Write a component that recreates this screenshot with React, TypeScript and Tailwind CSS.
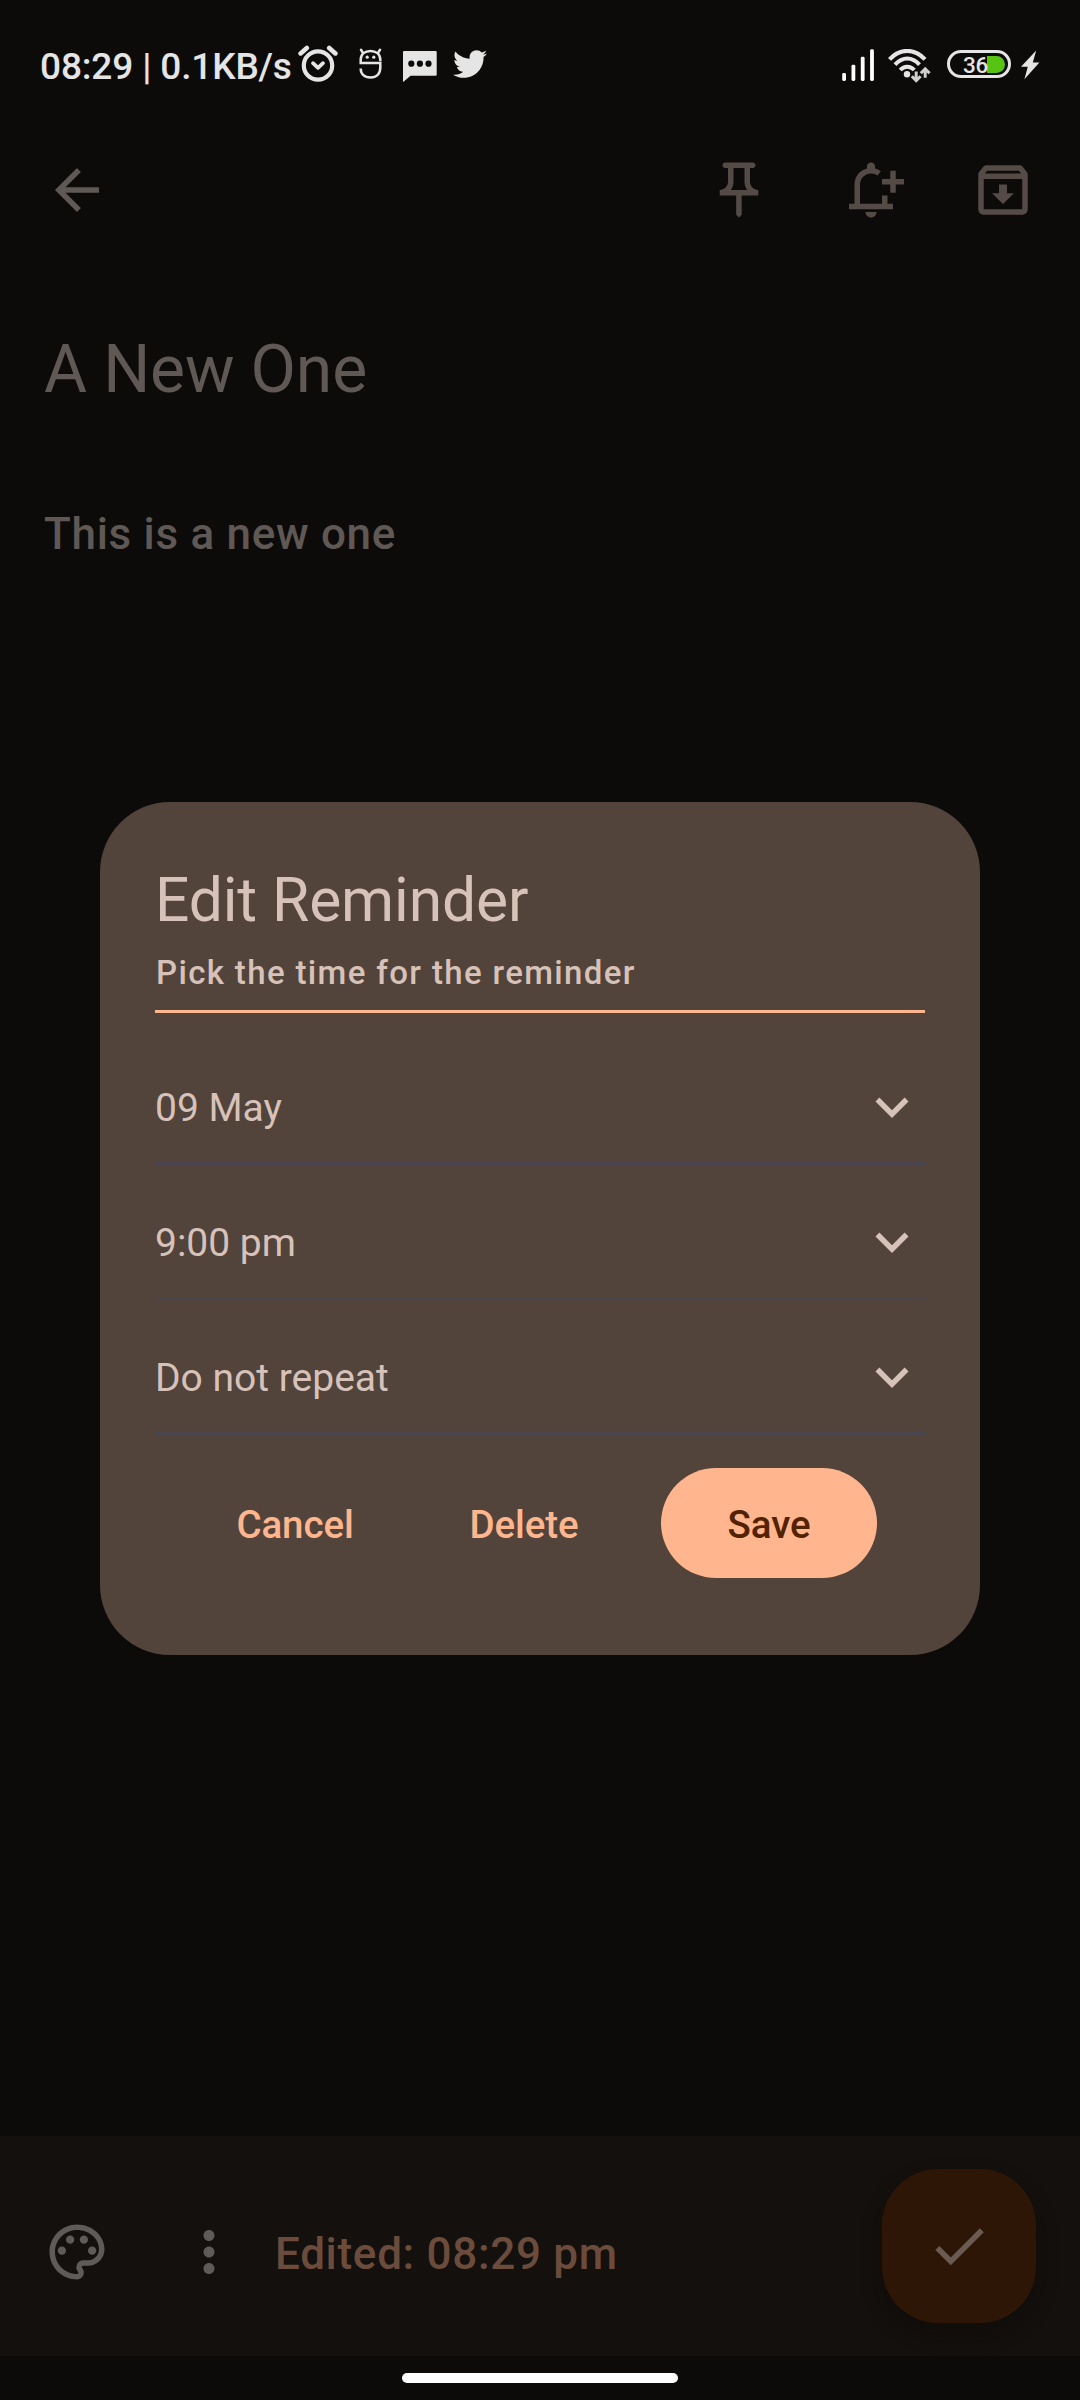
import React from "react";
import { FaTwitter } from "react-icons/fa";
import { MdArrowBack, MdCheck, MdKeyboardArrowDown, MdMoreVert, MdOutlinePalette, MdOutlinePushPin } from "react-icons/md";

function AlarmIcon() {
  return (
    <svg className="h-[37px] w-[40px]" viewBox="0 0 40 37" fill="none" stroke="#e5e5e5">
      <circle cx="20" cy="20.5" r="14.2" strokeWidth="4.2" />
      <path d="M2.6 8.4 8.8 3M37.4 8.4 31.2 3" strokeWidth="4.6" strokeLinecap="round" />
      <path d="M15 18.2 20 22.8 25 18.2" strokeWidth="3.8" strokeLinecap="round" strokeLinejoin="round" />
    </svg>
  );
}

function RobotIcon() {
  return (
    <svg className="h-[31px] w-[23px]" viewBox="0 0 23 31" fill="none" stroke="#e5e5e5" strokeWidth="2.5">
      <path d="M21.3 13.2V11.5C21.3 6 17 2.9 11.5 2.9S1.7 6 1.7 11.500V15H21.300V19.500C21.300 26 17.500 29.500 11.500 29.500S1.700 26 1.700 20.500" />
      <path d="M3.8 4.6 2 1.8M19.2 4.6 21 1.8" strokeLinecap="round" />
      <g fill="#e5e5e5" stroke="none">
        <circle cx="8.2" cy="9.2" r="1.6" />
        <circle cx="14.8" cy="9.2" r="1.6" />
      </g>
    </svg>
  );
}

function ChatIcon() {
  return (
    <svg className="h-[31px] w-[34px]" viewBox="0 0 34 31">
      <path d="M1.5 0h31c.8 0 1.2.5 1.2 1.2v22.3c0 .8-.4 1.2-1.2 1.2H7.5L.8 30.6c-.5.4-.8.1-.8-.4V1.2C0 .5.6 0 1.5 0z" fill="#e5e5e5" />
      <g fill="#0c0b09">
        <circle cx="8.3" cy="12.7" r="3.1" />
        <circle cx="16.9" cy="12.7" r="3.1" />
        <circle cx="25.5" cy="12.7" r="3.1" />
      </g>
    </svg>
  );
}

function SignalIcon() {
  return (
    <svg className="h-[32px] w-[33px]" viewBox="0 0 33 32" fill="#ffffff">
      <rect x="0.2" y="24" width="3.8" height="8" rx="1.4" />
      <rect x="9.5" y="15.8" width="3.8" height="16.2" rx="1.4" />
      <rect x="18.8" y="7.8" width="3.8" height="24.2" rx="1.4" />
      <rect x="28.1" y="0.3" width="3.8" height="31.7" rx="1.4" />
    </svg>
  );
}

function WifiIcon() {
  return (
    <svg className="h-[34px] w-[43px]" viewBox="0 0 43 34" fill="none" stroke="#e5e5e5">
      <path d="M1.5 10.4C12 -.9 26.5 -.9 37 10.4" strokeWidth="4.2" />
      <path d="M7 15.7C14.5 7.5 24 7.5 31.5 15.7" strokeWidth="4" />
      <path d="M12.2 21C16.4 16.5 22.1 16.5 26.3 21" strokeWidth="4" />
      <circle cx="19" cy="25.3" r="3.2" fill="#e5e5e5" stroke="none" />
      <g stroke="#cfcfcf" strokeWidth="3">
        <path d="M28.2 22.5V31.5M23.8 27.2 28.2 31.6 32.6 27.2" />
        <path d="M37.2 28.8V20M32.8 24.3 37.2 19.9 41.6 24.3" />
      </g>
    </svg>
  );
}

function BoltIcon() {
  return (
    <svg className="h-[30px] w-[19px]" viewBox="0 0 19 30" fill="#e5e5e5">
      <path d="M15.2.6 0 16.8h6.8L3.4 29.2 18.4 12.4H11.8z" />
    </svg>
  );
}

function BellAddIcon() {
  return (
    <svg className="size-[66px]" viewBox="0 0 24 24" fill="currentColor">
      <path d="M10 20h4c0 1.1-.9 2-2 2s-2-.9-2-2z" />
      <path d="M18 14v3h2v2H4v-2h2v-7c0-2.79 1.91-5.14 4.5-5.8v-.7C10.5 2.67 11.17 2 12 2s1.5.67 1.5 1.5v.7c.75.19 1.45.51 2.08.95l-1.19 1.61C13.71 6.27 12.88 6 12 6c-2.21 0-4 1.79-4 4v7h8v-3z" />
      <path d="M24 8h-3V5h-2v3h-3v2h3v3h2v-3h3z" />
    </svg>
  );
}

function ArchiveIcon() {
  return (
    <svg className="size-[66px]" viewBox="0 0 24 24" fill="currentColor">
      <path d="M20.54 5.23l-1.39-1.68C18.88 3.21 18.47 3 18 3H6c-.47 0-.88.21-1.16.55L3.46 5.23C3.17 5.57 3 6.02 3 6.5V19c0 1.1.9 2 2 2h14c1.1 0 2-.9 2-2V6.5c0-.48-.17-.93-.46-1.27zM6.24 5h11.52l.83 1H5.42l.82-1zM5 19V8h14v11H5z" />
      <path d="M8 13.2h2.55V10h2.9v3.2H16l-4 3.9z" />
    </svg>
  );
}

function StatusBar() {
  return (
    <div className="flex h-[102px] items-start pl-[40px] text-[#e5e5e5]">
      <span className="mt-[42px] w-[258px] text-[37px] leading-[50px] font-medium tracking-[-0.15px] whitespace-nowrap">08:29 | 0.1KB/s</span>
      <div className="mt-[45px]"><AlarmIcon /></div>
      <div className="mt-[48px] ml-[21px]"><RobotIcon /></div>
      <div className="mt-[51px] ml-[21px]"><ChatIcon /></div>
      <FaTwitter className="mt-[47px] ml-[16px] size-[34px]" />
      <div className="mt-[49px] ml-auto"><SignalIcon /></div>
      <div className="mt-[49px] ml-[13px]"><WifiIcon /></div>
      <div className="mt-[50px] ml-[16px] flex h-[28px] w-[64px] items-center rounded-full border-[3px] border-[#e5e5e5] pl-[13px]">
        <span className="relative z-10 w-[24px] pt-[2px] text-[22.5px] leading-[24px] font-medium tracking-[-0.3px] whitespace-nowrap">36</span>
        <span className="h-[17px] w-[18px] rounded-r-full bg-[#57c414]" />
      </div>
      <div className="mt-[50px] mr-[40px] ml-[10px]"><BoltIcon /></div>
    </div>
  );
}

function PickerRow({ label }: { label: string }) {
  return (
    <div className="flex h-[135px] items-center justify-between border-b-[3px] border-[#4a464f] pt-[22px]">
      <span className="pt-[3px] text-[39px] leading-[55px]">{label}</span>
      <MdKeyboardArrowDown className="size-[66px]" />
    </div>
  );
}

function ReminderDialog() {
  return (
    <div className="h-[853px] w-[880px] rounded-[70px] bg-[#52433b] px-[55px] pt-[60px] text-[#d7c2b9]">
      <h2 className="text-[60.5px] leading-[77px] tracking-[-0.1px]">Edit Reminder</h2>
      <p className="mt-3 pl-px text-[33px] leading-[44px] font-medium tracking-[1.35px]">Pick the time for the reminder</p>
      <div className="mt-[15px] mb-[17px] h-[3px] bg-[#ffb68e]" />
      <PickerRow label="09 May" />
      <PickerRow label="9:00 pm" />
      <PickerRow label="Do not repeat" />
      <div className="mt-[33px] flex h-[110px] justify-end pr-12 text-[38.5px] leading-[55px] font-medium text-[#ffb68e]">
        <button className="mr-[79px] w-[150px] pt-[3px] tracking-[-0.1px]">Cancel</button>
        <button className="mr-[62px] w-[150px] pt-[3px] tracking-[-0.1px]">Delete</button>
        <button className="w-[216px] rounded-full bg-[#ffb68e] pt-[3px] tracking-[-0.1px] text-[#532200]">Save</button>
      </div>
    </div>
  );
}

export default function App() {
  return (
    <div className="relative flex h-[2400px] w-[1080px] flex-col overflow-hidden bg-[#0c0b09] font-[Roboto,sans-serif]">
      <StatusBar />
      <header className="flex h-[176px] items-center pr-[44px] pl-[44px] text-[#544b47]">
        <MdArrowBack className="size-[66px] text-[#5f5855]" />
        <div className="ml-auto flex gap-[66px]">
          <MdOutlinePushPin className="size-[66px]" />
          <BellAddIcon />
          <ArchiveIcon />
        </div>
      </header>
      <main className="px-[44px] text-[#5f5855]">
        <h1 className="mt-[52px] text-[66px] leading-[80px] tracking-[-0.15px]">A New One</h1>
        <p className="mt-[94px] text-[44px] leading-[60px] font-medium tracking-[0.7px]">This is a new one</p>
      </main>
      <footer className="mt-auto flex h-[220px] items-center bg-[#14100d] pr-[44px] pl-[44px] text-[#5f5b58]">
        <MdOutlinePalette className="mt-[12px] size-[66px]" />
        <MdMoreVert className="mt-[12px] ml-[66px] size-[66px]" />
        <span className="mt-[16px] ml-[33px] text-[44px] leading-[60px] font-medium tracking-[0.69px] text-[#6b4c3c]">Edited: 08:29 pm</span>
        <div className="ml-auto flex size-[154px] items-center justify-center rounded-[56px] bg-[#2d1606] text-[#6b5a52] shadow-[0_10px_20px_rgba(10,9,9,0.45)]">
          <MdCheck className="size-[66px]" />
        </div>
      </footer>
      <div className="flex h-[44px] justify-center bg-[#0c0b0a] pt-[17px]">
        <div className="h-[10px] w-[276px] rounded-full bg-white" />
      </div>
      <div className="absolute inset-0 flex items-start justify-center pt-[802px]">
        <ReminderDialog />
      </div>
    </div>
  );
}
